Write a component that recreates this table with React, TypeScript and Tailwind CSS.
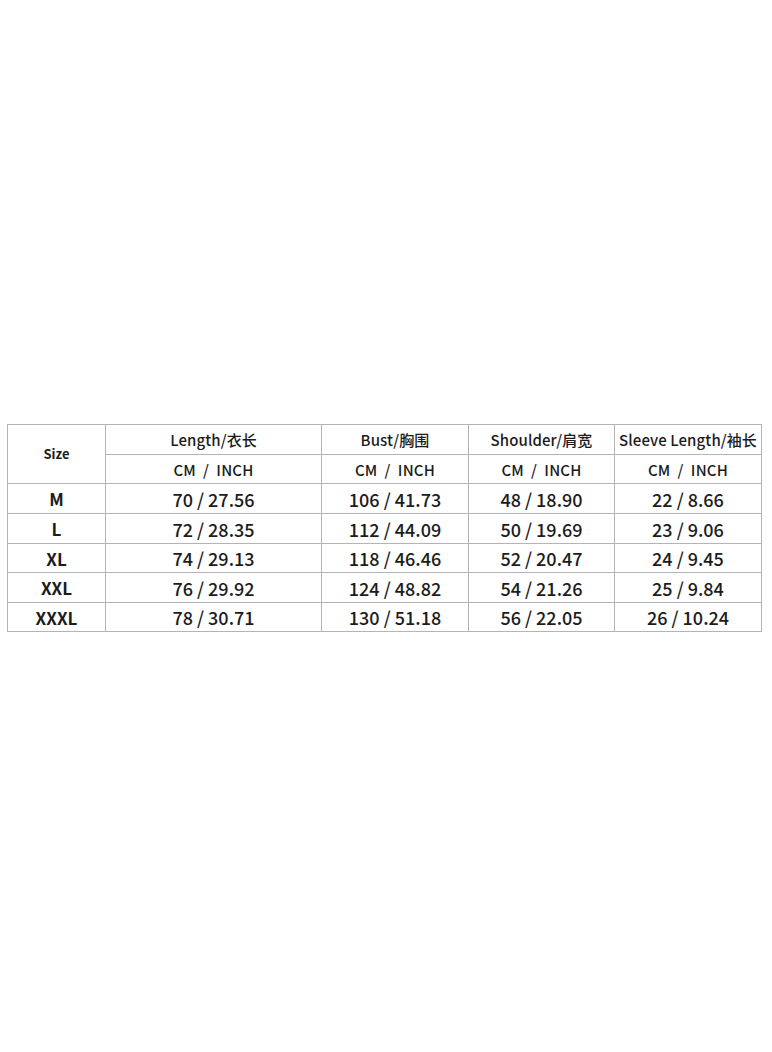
import React from "react";

const rows = [
  { size: "M", values: ["70 / 27.56", "106 / 41.73", "48 / 18.90", "22 / 8.66"], h: "h-[30px]" },
  { size: "L", values: ["72 / 28.35", "112 / 44.09", "50 / 19.69", "23 / 9.06"], h: "h-[30px]" },
  { size: "XL", values: ["74 / 29.13", "118 / 46.46", "52 / 20.47", "24 / 9.45"], h: "h-[29px]" },
  { size: "XXL", values: ["76 / 29.92", "124 / 48.82", "54 / 21.26", "25 / 9.84"], h: "h-[30px]" },
  { size: "XXXL", values: ["78 / 30.71", "130 / 51.18", "56 / 22.05", "26 / 10.24"], h: "h-[29px]" },
];

const headers = ["Length/衣长", "Bust/胸围", "Shoulder/肩宽", "Sleeve Length/袖长"];

const cell = "border border-[#b4b4b4] p-0 text-center align-middle";

export default function App() {
  return (
    <div
      className="min-h-[1052px] w-[772px] bg-white pl-[7px] pt-[424px] text-[#1c1c1c]"
      style={{ fontFamily: '"Noto Sans CJK SC", "Noto Sans", sans-serif' }}
    >
      <table className="table-fixed border-collapse">
        <colgroup>
          <col className="w-[98px]" />
          <col className="w-[216px]" />
          <col className="w-[147px]" />
          <col className="w-[146px]" />
          <col className="w-[147px]" />
        </colgroup>
        <thead>
          <tr className="h-[30px]">
            <th rowSpan={2} className={`${cell} text-[13px] font-bold`}>
              Size
            </th>
            {headers.map((h) => (
              <th key={h} className={`${cell} whitespace-nowrap text-[15px] font-medium leading-none tracking-[0.1px]`}>
                {h}
              </th>
            ))}
          </tr>
          <tr className="h-[29px]">
            {headers.map((h) => (
              <th key={h} className={`${cell} text-[15px] font-medium leading-none tracking-[0.2px]`}>
                CM&nbsp;&nbsp;/&nbsp;&nbsp;INCH
              </th>
            ))}
          </tr>
        </thead>
        <tbody>
          {rows.map((r) => (
            <tr key={r.size} className={r.h}>
              <td className={`${cell} text-[17px] font-bold leading-none`}>{r.size}</td>
              {r.values.map((v, i) => (
                <td key={i} className={`${cell} text-[18px] font-medium leading-none`}>
                  {v}
                </td>
              ))}
            </tr>
          ))}
        </tbody>
      </table>
    </div>
  );
}
